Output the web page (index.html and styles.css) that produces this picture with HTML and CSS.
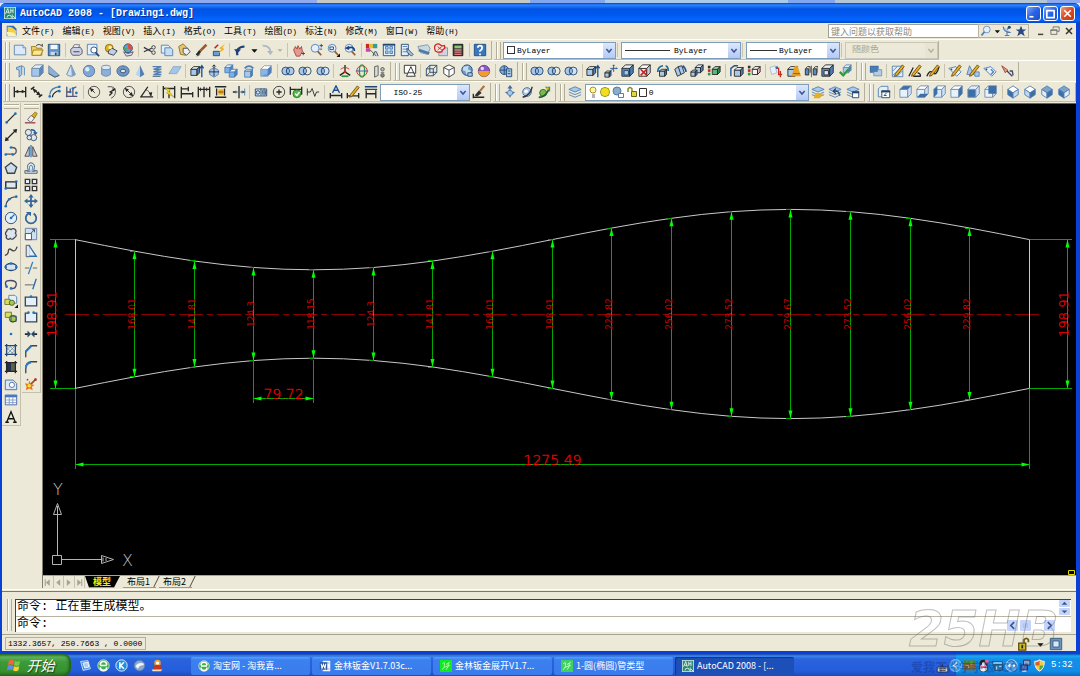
FILE: index.html
```html
<!DOCTYPE html>
<html lang="zh-CN">

<head>
    <meta charset="utf-8">
    <title>AutoCAD 2008 - [Drawing1.dwg]</title>
    <link rel="stylesheet" href="styles.css">
    <script src="script.js" defer></script>
</head>

<body>
    <div class="backdrop"></div>
    <main class="window">
        <header class="titlebar">
            <svg class="app-icon" data-icon="app"></svg>
            <h1>AutoCAD 2008 - [Drawing1.dwg]</h1>
            <div class="window-buttons">
                <button aria-label="Minimize"><svg data-icon="winmin"></svg></button>
                <button aria-label="Maximize"><svg data-icon="winmax"></svg></button>
                <button class="close" aria-label="Close"><svg data-icon="winclose"></svg></button>
            </div>
        </header>

        <nav class="menubar">
            <svg class="doc-icon" data-icon="doc"></svg>
            <button>文件<span>(F)</span></button>
            <button>编辑<span>(E)</span></button>
            <button>视图<span>(V)</span></button>
            <button>插入<span>(I)</span></button>
            <button>格式<span>(O)</span></button>
            <button>工具<span>(T)</span></button>
            <button>绘图<span>(D)</span></button>
            <button>标注<span>(N)</span></button>
            <button>修改<span>(M)</span></button>
            <button>窗口<span>(W)</span></button>
            <button>帮助<span>(H)</span></button>
            <div class="help-search">
                <input type="text" aria-label="帮助" placeholder="键入问题以获取帮助">
                <div class="help-tools" data-tools="search drop comm star"></div>
                <div class="doc-buttons" data-tools="docmin docrestore docclose"></div>
            </div>
        </nav>

        <div class="toolbar-row">
            <div class="toolbar standard" role="toolbar" aria-label="Standard">
                <i class="grip"></i>
                <div class="tools" data-tools="new open save | plot preview publish dwf | cut copy paste match block | undo drop redo dropoff | pan zoomrt zoomwin zoomprev | props center palettes sheet markup calc | help"></div>
            </div>
            <div class="toolbar properties" role="toolbar" aria-label="Properties">
                <i class="grip"></i>
                <div class="combo color">
                    <i class="swatch"></i>
                    <select aria-label="Color"><option>ByLayer</option></select>
                    <svg class="arrow" data-icon="chevron"></svg>
                </div>
                <i class="sep"></i>
                <div class="combo linetype">
                    <i class="sample"></i>
                    <select aria-label="Linetype"><option>ByLayer</option></select>
                    <svg class="arrow" data-icon="chevron"></svg>
                </div>
                <i class="sep"></i>
                <div class="combo lineweight">
                    <i class="sample"></i>
                    <select aria-label="Lineweight"><option>ByLayer</option></select>
                    <svg class="arrow" data-icon="chevron"></svg>
                </div>
                <i class="sep"></i>
                <div class="combo plotstyle">
                    <select aria-label="Plot style" disabled><option>随颜色</option></select>
                    <svg class="arrow" data-icon="chevron"></svg>
                </div>
            </div>
        </div>

        <div class="toolbar-row">
            <div class="toolbar modeling" role="toolbar" aria-label="Modeling">
                <i class="grip"></i>
                <div class="tools" data-tools="polysolid box wedge cone sphere cylinder torus pyramid helix planar | extrude gizmo cubes revolve loft | union subtract intersect | move3d rotate3d align3d"></div>
            </div>
            <div class="toolbar visual" role="toolbar" aria-label="Visual Styles">
                <i class="grip"></i>
                <div class="tools" data-tools="wire2d | wire3d hidden realistic conceptual | stylemgr"></div>
            </div>
            <div class="toolbar solidedit" role="toolbar" aria-label="Solid Editing">
                <i class="grip"></i>
                <div class="tools" data-tools="union subtract intersect | extrude movef offsetf deletef rotatef taperf copyf colorf | copyedge coloredge | imprint clean separate shell check"></div>
            </div>
            <div class="toolbar modify2" role="toolbar" aria-label="Modify II">
                <i class="grip"></i>
                <div class="tools" data-tools="draworder | hatchedit polyedit splineedit | attedit attblock attsync attext"></div>
            </div>
        </div>

        <div class="toolbar-row">
            <div class="toolbar dimension" role="toolbar" aria-label="Dimension">
                <i class="grip"></i>
                <div class="tools" data-tools="linear aligned arclen ordinate | radius jogged diameter angular | quick baseline continue space dimbreak | tolerance centermark inspect jogline | dimedit dimtext dimupdate"></div>
                <div class="combo dimstyle">
                    <select aria-label="Dimension style"><option>ISO-25</option></select>
                    <svg class="arrow" data-icon="chevron"></svg>
                </div>
                <div class="tools" data-tools="stylebrush"></div>
            </div>
            <div class="toolbar orbit" role="toolbar" aria-label="Orbit">
                <i class="grip"></i>
                <div class="tools" data-tools="orbit freeorbit contorbit"></div>
            </div>
            <div class="toolbar layers" role="toolbar" aria-label="Layers">
                <i class="grip"></i>
                <div class="tools" data-tools="layers"></div>
                <div class="combo layer">
                    <svg class="layer-state" data-icon="layerstate"></svg>
                    <select aria-label="Layer"><option>0</option></select>
                    <svg class="arrow" data-icon="chevron"></svg>
                </div>
                <div class="tools" data-tools="laycur layprev laystate"></div>
            </div>
            <div class="toolbar views" role="toolbar" aria-label="View">
                <i class="grip"></i>
                <div class="tools" data-tools="namedviews | vtop vbottom vleft vright vfront vback | sw se ne nw"></div>
            </div>
        </div>

        <section class="workspace">
            <aside class="docks">
                <div class="dock draw" role="toolbar" aria-label="Draw">
                    <i class="grip"></i>
                    <div class="tools" data-tools="line xline pline polygon rect arc circle cloud spline ellipse ellarc insblock mkblock point hatch gradient region table mtext"></div>
                </div>
                <div class="dock modify" role="toolbar" aria-label="Modify">
                    <i class="grip"></i>
                    <div class="tools" data-tools="erase copyobj mirror offset array move rotate scale stretch trim extend breakpt break join chamfer fillet explode"></div>
                </div>
            </aside>
            <div class="document">
                <svg class="canvas" role="img" aria-label="Drawing1.dwg">
                    <g id="sheet" transform="translate(-43 -104)">
                        <g class="ucs">
                            <path d="M52.5 555.5h9v9h-9zM57.5 555V515M53.5 514.5h8l-4-11zM62 559.5h39M101.5 555.5v8l12-4z" />
                            <path d="M57.5 506v9M103 557.5v4M106 558v3" />
                            <text x="53" y="495">Y</text>
                            <text x="122" y="566">X</text>
                        </g>
                        <path class="corner" d="M1068.5 570.5h6v4h-6z" />
                    </g>
                </svg>
                <div class="tabs">
                    <div class="tab-nav" data-tools="first prev next last"></div>
                    <button class="tab active">模型</button>
                    <button class="tab">布局1</button>
                    <button class="tab">布局2</button>
                </div>
            </div>
        </section>

        <section class="command">
            <i class="grip"></i>
            <div class="console">
                <div class="history">
                    <p>命令: 正在重生成模型。</p>
                    <div class="vscroll" data-tools="up down"></div>
                </div>
                <div class="prompt">
                    <label for="cmd">命令:</label>
                    <input type="text" id="cmd">
                    <div class="hscroll" data-tools="left thumb right"></div>
                </div>
            </div>
        </section>

        <footer class="status">
            <output>1332.3657, 250.7663 , 0.0000</output>
            <div class="status-tools" data-tools="lock drop screen"></div>
        </footer>
    </main>

    <div class="taskbar">
        <button class="start"><svg data-icon="flag"></svg>开始</button>
        <div class="quick" data-tools="desk ie kugou bird qq"></div>
        <div class="tasks">
            <button><svg data-icon="ie"></svg>淘宝网 - 淘我喜...</button>
            <button><svg data-icon="word"></svg>金林钣金V1.7.03c...</button>
            <button><svg data-icon="jl"></svg>金林钣金展开V1.7...</button>
            <button><svg data-icon="jl2"></svg>1-圆(椭圆)管类型</button>
            <button class="active"><svg data-icon="app"></svg>AutoCAD 2008 - [...</button>
        </div>
        <svg class="keyboard" data-icon="keyboard"></svg>
        <div class="tray">
            <div class="tray-icons" data-tools="collapse box3 penguin monitor globe net shield"></div>
            <time>5:32</time>
        </div>
        <div class="watermark">
            <b>25HB</b>
            <span>爱我下件学学钣 .COM</span>
        </div>
    </div>
</body>

</html>
```
FILE: styles.css
```css
* {
    box-sizing: border-box;
}

body {
    margin: 0;
    min-height: 100vh;
    display: flex;
    flex-direction: column;
    background: #ece9d8;
    color: #000;
    font-family: "Noto Sans CJK SC", sans-serif;
    font-size: 9px;
    line-height: 12px;
}

button {
    border: 0;
    padding: 0;
    margin: 0;
    background: none;
    color: inherit;
    font: inherit;
    display: flex;
    align-items: center;
    justify-content: center;
}

svg {
    display: block;
    flex: none;
}

.backdrop {
    height: 3px;
    background: linear-gradient(90deg, #8fabee 317px, #c6c8c2 317px 530px, #7fa6ef 530px 605px, #a9c9e8 605px 788px, #7fa6ef 788px 835px, #b4c6d4 835px 1047px, #8fabee 1047px);
}

.window {
    flex: 1;
    display: flex;
    flex-direction: column;
    padding: 0 4px 3px 2px;
    background: #0a3fd8;
    border-radius: 6px 6px 0 0;
}

/* title bar */
.titlebar {
    height: 20px;
    display: flex;
    align-items: center;
    gap: 4px;
    margin: 0 -4px 0 -2px;
    padding: 0 5px 0 4px;
    border-radius: 6px 6px 0 0;
    background: linear-gradient(#0a3fc0, #2d83ff 2px, #0054e4 6px, #0059f0 12px, #0567ff 17px, #0046c8);
    color: #fff;

    h1 {
        margin: 0;
        flex: 1;
        font: bold 10px "Liberation Mono", monospace;
        text-shadow: 1px 1px 0 #0a2e8c;
    }
}

.app-icon {
    width: 12px;
    height: 12px;
}

.window-buttons {
    display: flex;
    gap: 2px;

    button {
        width: 15px;
        height: 15px;
        border: 1px solid #fff;
        border-radius: 3px;
        background: linear-gradient(135deg, #7fa8f8, #2a62e4 50%, #1d4fd0);
    }

    .close {
        background: linear-gradient(135deg, #f09a80, #dc4a22 50%, #c03a10);
    }

    svg {
        width: 13px;
        height: 13px;
    }
}

/* menu */
.menubar {
    height: 16px;
    display: flex;
    align-items: center;
    gap: 8px;
    padding-left: 4px;
    background: #ece9d8;

    > button span {
        font: 8px "Liberation Mono", monospace;
    }
}

.doc-icon {
    width: 12px;
    height: 12px;
    margin-right: -4px;
}

.help-search {
    margin-left: auto;
    display: flex;
    align-items: center;

    input {
        width: 150px;
        height: 14px;
        padding: 0 2px;
        border: 1px solid #a0a090;
        border-right: 0;
        background: #fff;
        font: 9px "Noto Sans CJK SC", sans-serif;
    }

    input::placeholder {
        color: #8c8c80;
    }

    svg {
        width: 12px;
        height: 12px;
    }
}

.help-tools {
    display: flex;
    height: 14px;
    border: 1px solid #b8b4a0;

    button {
        width: 14px;
    }

    .t-drop {
        width: 7px;
    }
}

.doc-buttons {
    display: flex;
    padding-left: 5px;

    button {
        width: 14px;
    }
}

/* toolbars */
.toolbar-row {
    height: 21px;
    display: flex;
    gap: 2px;
    padding: 1px 0 0 1px;
    border-top: 1px solid #fff;
    background: #ece9d8;
}

.toolbar {
    flex: none;
    display: flex;
    align-items: center;
    padding: 0 2px;
    border-right: 1px solid #b4b09c;
    border-bottom: 1px solid #c0bca8;

    svg {
        width: 14px;
        height: 14px;
    }

    button {
        flex: 1 1 0;
        min-width: 0;
        height: 18px;
    }

    .t-drop,
    .t-dropoff {
        flex: 0 0 9px;
    }
}

.tools {
    display: contents;
}

.toolbar button:hover,
.dock button:hover {
    background: #c1d2ee;
}

.grip {
    flex: none;
    width: 5px;
    height: 17px;
    margin-right: 1px;
    border: solid #b0ac98;
    border-width: 0 1px;
    box-shadow: inset 1px 0 #fff, inset -1px 0 #ece9d8;
}

.sep {
    flex: none;
    width: 1px;
    height: 14px;
    margin: 0 2px;
    background: #c8c4b0;
}

.standard { width: 489px; }
.properties { width: 445px; }
.modeling { width: 388px; }
.visual { width: 125px; }
.solidedit { width: 337px; }
.modify2 { width: 160px; }
.dimension { width: 488px; }
.orbit { width: 63px; }
.layers { width: 307px; }
.views { flex: 1; }

.properties .sep {
    margin: 0 2px 0 1px;
}

/* drop-downs */
.combo {
    position: relative;
    flex: none;
    height: 17px;
    margin-left: 1px;

    select {
        appearance: none;
        width: 100%;
        height: 100%;
        padding: 0 14px 0 4px;
        border: 1px solid #7f9db9;
        border-radius: 0;
        background: #fff;
        color: #000;
        font: 8px "Liberation Mono", "Noto Sans CJK SC", monospace;
    }

    select:disabled {
        padding-left: 6px;
        border-color: #c9c7ba;
        background: #ece9d8;
        color: #a8a594;
        opacity: 1;
        font-size: 9px;
    }

    select:disabled ~ .arrow {
        background: #e8e4d4;
        color: #b8b4a0;
    }
}

.combo .arrow {
    position: absolute;
    top: 1px;
    right: 1px;
    width: 12px;
    height: 15px;
    background: linear-gradient(#dde7fd, #b4c9f8);
    color: #3b5690;
    pointer-events: none;
}

.color { width: 113px; select { padding-left: 13px; } }
.linetype { width: 120px; select { padding-left: 52px; } }
.lineweight { width: 94px; select { padding-left: 32px; } }
.plotstyle { width: 93px; }
.dimstyle { width: 90px; select { padding-left: 12px; } }
.layer { width: 224px; select { padding-left: 63px; } }

.swatch,
.sample {
    position: absolute;
    left: 4px;
    top: 4px;
    width: 8px;
    height: 8px;
    border: 1px solid #333;
}

.sample {
    top: 8px;
    width: 45px;
    height: 1px;
    border-width: 1px 0 0;
}

.lineweight .sample {
    width: 27px;
}

.combo .layer-state {
    position: absolute;
    left: 2px;
    top: 1px;
    width: 60px;
    height: 15px;
}

/* workspace */
.workspace {
    flex: 1;
    display: flex;
    padding: 1px 0 3px;
    background: #ece9d8;
}

.docks {
    flex: none;
    width: 40px;
    display: flex;
    align-items: flex-start;
    gap: 1px;
}

.dock {
    width: 19px;
    display: flex;
    flex-direction: column;
    align-items: center;
    padding-top: 1px;
    border: solid #c4c0ac;
    border-width: 0 1px 1px 0;

    .grip {
        width: 15px;
        height: 5px;
        margin: 0 0 1px;
        border-width: 1px 0;
        box-shadow: inset 0 1px #fff;
    }

    button {
        flex: 1 1 0;
        min-height: 0;
        width: 17px;
    }

    svg {
        width: 14px;
        height: 14px;
    }
}

.draw { height: 323px; }
.modify { height: 290px; }

.document {
    flex: 1;
    display: flex;
    flex-direction: column;
    border-left: 1px solid #848070;
}

.canvas {
    width: 100%;
    flex: 1;
    border-top: 1px solid #666258;
    background: #000;
}

.outline {
    fill: none;
    stroke: #c8c8c8;
}

.axis {
    stroke: #8c0000;
    stroke-width: 1;
    stroke-dasharray: 24 4 6 4;
}

.dim-line {
    fill: none;
    stroke: #00a800;
    shape-rendering: crispEdges;
}

.dim-arrow {
    fill: #00ff00;
}

.dim-text {
    fill: #d00000;
    font: 9px "DejaVu Sans", sans-serif;
    text-anchor: middle;
}

.dim-text.tall,
.dim-text.wide {
    fill: #f00000;
    stroke: #f00000;
    stroke-width: 0.3;
    font-size: 13px;
    font-weight: 200;
}

.dim-text.wide {
    font-size: 14px;
}

.ucs {
    fill: none;
    stroke: #b4b4b4;

    text {
        fill: #c4c4c4;
        stroke: none;
        font: 200 16px "DejaVu Sans", sans-serif;
    }
}

.corner {
    fill: none;
    stroke: #e0d800;
}

.tabs {
    height: 13px;
    display: flex;
    gap: 3px;
    border-top: 1px solid #a8a494;
}

.tab-nav {
    display: flex;
    width: 42px;

    button {
        flex: 1;
        border-right: 1px solid #c4c0b0;
    }

    svg {
        width: 9px;
        height: 9px;
    }
}

.tab {
    position: relative;
    padding: 0 6px 0 4px;
    border-bottom: 1px solid #a09c8c;
}

.tab:not(.active)::after {
    content: "";
    position: absolute;
    right: -1px;
    top: 0;
    bottom: 0;
    border-right: 1px solid #504c40;
    transform: skewX(-26deg);
}

.tab.active {
    margin-left: -3px;
    padding: 0 9px 0 8px;
    background: #000;
    color: #f0f000;
    font-weight: bold;
    clip-path: polygon(0 0, 100% 0, 82% 100%, 12% 100%);
}

/* command window */
.command {
    display: flex;
    padding: 7px 5px 2px 5px;
    border-top: 1px solid #7c7a6c;
    background: #ece9d8;
    box-shadow: 0 -1px #ece9d8, 0 -2px #fff;

    .grip {
        height: 32px;
        margin-right: 3px;
    }
}

.console {
    flex: 1;
    border: solid #404040;
    border-width: 1px 0 0 1px;
    background: #fff;
    font: 12px/15px "Liberation Mono", "Noto Sans CJK SC", monospace;

    p {
        margin: 0;
        flex: 1;
    }

    svg {
        width: 9px;
        height: 9px;
    }

    button {
        border-radius: 1px;
        background: #c4d4fb;
        color: #3b5690;
    }
}

.history {
    height: 17px;
    display: flex;
    padding: 0 0 1px 1px;
    border-bottom: 1px solid #b8b4a4;
    overflow: hidden;
}

.vscroll {
    width: 12px;
    display: flex;
    flex-direction: column;
    gap: 1px;

    button {
        flex: 1;
        min-height: 0;
        width: 11px;
    }
}

.prompt {
    height: 15px;
    display: flex;
    align-items: center;
    padding-left: 1px;

    input {
        flex: 1;
        height: 14px;
        border: 0;
        padding: 0 4px;
        outline: 0;
        font: inherit;
    }
}

.hscroll {
    display: flex;
    width: 64px;
    gap: 2px;
    padding-top: 1px;

    button {
        width: 11px;
        height: 11px;
    }

    .t-right {
        margin-left: 11px;
    }
}

.status {
    height: 17px;
    display: flex;
    align-items: center;
    justify-content: space-between;
    padding: 1px 12px 0 3px;
    border-top: 1px solid #a8a494;
    background: #ece9d8;

    output {
        min-width: 141px;
        height: 13px;
        padding: 0 2px;
        border: 1px solid #b4b09c;
        font: 8px/12px "Liberation Mono", monospace;
    }
}

.status-tools {
    display: flex;

    button {
        width: 16px;
    }

    svg {
        width: 14px;
        height: 14px;
    }
}

/* taskbar */
.taskbar {
    position: relative;
    height: 22px;
    display: flex;
    align-items: stretch;
    background: linear-gradient(#1941a5, #3b86ee 2px, #2a63dc 5px, #245ddb 17px, #1d4bb8);
    color: #fff;
}

.start {
    width: 71px;
    gap: 6px;
    padding-right: 10px;
    border-radius: 0 8px 8px 0;
    background: linear-gradient(#2f7a2c, #5cb257 3px, #3c9a3a 8px, #37922f 17px, #2a6d24);
    box-shadow: inset -2px 0 3px #1d5a1b;
    font: italic 14px "Noto Sans CJK SC", sans-serif;
    text-shadow: 1px 1px 1px #123c10;

    svg {
        width: 14px;
        height: 14px;
    }
}

.quick {
    display: flex;
    padding-left: 6px;

    button {
        width: 17px;
        margin-right: 1px;
    }

    svg {
        width: 13px;
        height: 13px;
    }
}

.tasks {
    display: flex;
    flex: 1;
    gap: 2px;
    margin-left: 24px;
    padding: 3px 0 1px;

    button {
        flex: 0 1 119px;
        justify-content: flex-start;
        gap: 3px;
        padding-left: 7px;
        border-radius: 2px;
        background: linear-gradient(#5b9cf8, #3c80f0 3px, #3a7bea);
        white-space: nowrap;
    }

    .active {
        background: #1d4fb8;
        box-shadow: inset 1px 1px 1px #12347c;
    }

    svg {
        width: 12px;
        height: 12px;
    }
}

.keyboard {
    width: 13px;
    height: 13px;
    align-self: center;
    margin: 4px 7px 0 0;
}

.tray {
    width: 124px;
    display: flex;
    align-items: center;
    background: linear-gradient(#0c59b9, #1ca8f4 2px, #1290e8 5px, #0f8dea 17px, #0b6cc0);

    time {
        padding-left: 5px;
        font: 9px "Liberation Mono", monospace;
    }
}

.tray-icons {
    display: flex;
    margin-left: -8px;

    button {
        width: 14px;
    }

    svg {
        width: 13px;
        height: 13px;
    }
}

.watermark {
    position: absolute;
    right: 3px;
    bottom: 0;
    width: 168px;
    pointer-events: none;

    b {
        display: block;
        color: transparent;
        font: italic bold 50px/58px "DejaVu Sans", sans-serif;
        -webkit-text-stroke: 1px rgba(110, 110, 110, 0.45);
    }

    span {
        display: block;
        padding-left: 2px;
        color: rgba(14, 44, 130, 0.4);
        font: bold 12px/18px "Noto Sans CJK SC", sans-serif;
        white-space: nowrap;
    }
}
```
FILE: script.js
```js
const NAVY = '#24466f';
const BLUE = '#4f7fb5';
const SKY = '#a9c8ea';
const PALE = '#e4effa';
const INK = '#262626';
const GOLD = '#e2b021';
const GREEN = '#2f9a3c';
const RED = '#c8281e';

const path = (d, stroke = INK, fill = 'none', width = 1) =>
    `<path d="${d}" stroke="${stroke}" fill="${fill}" stroke-width="${width}"/>`;
const area = (d, fill) => `<path d="${d}" fill="${fill}"/>`;
const dot = (x, y, r, fill, stroke = 'none') => `<circle cx="${x}" cy="${y}" r="${r}" fill="${fill}" stroke="${stroke}"/>`;
const dots = (...pts) => pts.map(([x, y]) => dot(x, y, 1.5, '#1c74c8')).join('');

// small cube at x, y with front side s and depth d
const cube = (x, y, s, d, front = SKY, top = PALE, side = BLUE, line = INK) =>
    path(`M${x} ${y + d}h${s}v${s}h${-s}z`, line, front) +
    path(`M${x} ${y + d}l${d} ${-d}h${s}l${-d} ${d}z`, line, top) +
    path(`M${x + s} ${y + d}l${d} ${-d}v${s}l${-d} ${d}z`, line, side);

const pencil = area('M5 11l8-10 2 2-8 10-3 1z', GOLD) + path('M5 11l8-10 2 2-8 10-3 1z', '#6b4a10');
const rings = (mid) => dot(5.5, 8, 4.5, SKY, NAVY) + dot(10.5, 8, 4.5, mid, NAVY) + path('M8 4.5a4.5 4.5 0 0 1 0 7a4.5 4.5 0 0 1 0-7', NAVY, SKY);
const lens = dot(7, 6, 4.5, PALE, BLUE) + path('M10 9.5l4 4.5', '#96602c', 'none', 2);
const sheets = area('M1 5l7-3 7 3-7 3z', SKY) + path('M1 5l7-3 7 3-7 3zM1 8l7 3 7-3M1 11l7 3 7-3', BLUE);
const iso = (l, r, t) => path('M8 1l6 4-6 4-6-4z', BLUE, t) + path('M2 5l6 4v6l-6-4z', BLUE, l) + path('M14 5l-6 4v6l6-4z', BLUE, r);
const tag = path('M1 5l8-2 6 6-5 5z', BLUE, PALE) + dot(4, 6, 1, NAVY);

const icons = {
    app: area('M0 0h16v16H0z', '#d8f0e4') + area('M1 1h14v14H1z', '#2f8a76') + path('M2 9l3-7 2 7M3 7h4M9 2v6M9 5h3M12 2v6M4 14q0-3 3-3t3 3M11 10v5M12 12l3 3', '#fff'),
    doc: area('M1 1h9l4 4v10H1z', '#2c66c0') + area('M2 2l6 1 6 5-1 6-11-3z', '#f0cf4c') + area('M1 9l9 1 5 5H2z', '#fff3b0'),
    winmin: path('M3 12h5', '#fff', 'none', 2),
    winmax: path('M3 4.5h10M3.5 4v9h9V4', '#fff', 'none', 2),
    winclose: path('M4 4l8 8M12 4l-8 8', '#fff', 'none', 2),
    search: dot(9, 6, 4.5, PALE, BLUE) + path('M6 9l-4 5', BLUE, 'none', 2.5),
    drop: area('M5 7h7l-3.5 4z', '#111'),
    dropoff: area('M5 7h6l-3 3z', '#b4b09c'),
    comm: path('M8 8v6M5 14h6M3 2q0 8 10 8M12 2L8 6', BLUE, SKY, 1.5) + dot(11, 3, 2, NAVY),
    star: area('M8 1l2 5h5l-4 3 2 6-5-3.5L3 15l2-6-4-3h5z', '#2c4a80'),
    docmin: path('M4 12.5h7', '#444', 'none', 2),
    docrestore: path('M5.5 5V2.5h8v6H11M2.5 6.5h8v6h-8zM2 7h9', '#555'),
    docclose: path('M4 4l8 8M12 4l-8 8', '#333', 'none', 2),
    chevron: path('M4.5 6l3.5 4 3.5-4', 'currentColor', 'none', 2),

    new: path('M1.5 2.5h10l3 3v8h-13z', '#5b84a8', '#dbeafa') + path('M11.5 2.5v3h3', '#5b84a8', '#fff'),
    open: path('M1.5 4h5l1 2h6v8h-11z', '#9a7a20', '#f0cf60') + path('M4 8h11l-3 6H2z', '#9a7a20', '#ffe890') + path('M7 3q4-3 7 1v-3', INK),
    save: path('M1.5 1.5h13v13h-13z', NAVY, '#5b92cc') + area('M4 2h8v5H4z', '#f4f8fc') + area('M4 10h8v4H4z', '#c4d8ee') + area('M9 11h2v3H9z', NAVY),
    plot: path('M4 6l2-4h6l-1 4', '#667', '#fff') + path('M2 7l3-2h8l2 3v4l-3 2H4l-2-3z', '#556', '#ccd0e4') + path('M5 10h7', '#334'),
    preview: path('M1.5 1.5h11v12h-11z', BLUE, PALE) + dot(9, 8, 3.5, '#fff', NAVY) + path('M11 11l4 4', NAVY, 'none', 2),
    publish: dot(6, 6, 4.5, GOLD, '#8a6a10') + path('M5 9l4-3 6 3-4 5-6-2z', '#334', '#bcd0e8') + dot(7, 5, 2, '#fff3a0'),
    dwf: dot(8, 6, 5, '#58a0d8', NAVY) + area('M8 1a5 5 0 0 1 4 8l-4-3z', '#e05038') + area('M3 6l5 0-3 4z', '#4cae50') + path('M3 10l5 2 6-2-2 4-6 1z', '#556', '#dde'),
    cut: path('M1 5l9 5M1 10l9-4', '#334', 'none', 1.5) + dot(12, 5, 2, 'none', '#334') + dot(12, 11, 2, 'none', '#334'),
    copy: path('M1.5 2.5h8l2 2v7h-10z', BLUE, PALE) + path('M5.5 5.5h7l2 2v7h-9z', BLUE, '#c4dcf4'),
    paste: path('M2 4l5-3 6 6-3 7-6-1z', '#8a6a20', '#e8c86c') + path('M7 6l5 0 3 4-4 4-4-3z', '#445', '#e8f0fa'),
    match: path('M2 14l4-5', INK, 'none', 3) + path('M6 9l7-7', '#9a5a30', 'none', 3) + path('M2 15l4-2', '#555'),
    block: path('M1.5 9.5h7v5h-7z', NAVY, '#6c9cd0') + area('M15 1l-7 5 3 1-5 6 8-6-2-2z', '#f0b020') + path('M3 6l4-4', RED, 'none', 2),
    undo: path('M4 14q-3-9 8-10', '#1d3f7c', 'none', 2.5) + area('M0 7h8l-4 5z', '#1d3f7c'),
    redo: path('M3 3q9 0 9 8', '#b0b8c4', 'none', 2) + area('M8 9h7l-3 5z', '#b0b8c4'),
    pan: path('M3 8l2-4 2 3 1-4 2 4 2-3 1 6-3 5H6z', '#a04040', '#e49a8c') + path('M12 12h4M14 10v4', NAVY),
    zoomrt: lens + path('M12 3h4M14 1v4M12 7h3', NAVY),
    zoomwin: lens + path('M4.5 4.5h4v3h-4z', NAVY) + area('M16 12v4h-4z', '#111'),
    zoomprev: lens + path('M13 9Q13 3 5 6', '#1d3f7c', 'none', 2) + area('M2 6l5-3v5z', '#1d3f7c'),
    props: area('M1 1h4v5H1z', RED) + area('M5 1h4v5H5z', '#e8c020') + area('M9 1h5v5H9z', '#3c9a9a') + area('M1 6h5v4H1z', '#d040b0') + path('M6 8l7 7M9 15l2-5h2l2 5', '#345', '#cde'),
    center: path('M1.5 1.5h13v13h-13z', NAVY, PALE) + path('M4 4h3v3H4zM9 4h3v3H9zM4 9h3v3H4zM9 9h3v3H9z', BLUE, SKY) + path('M1 2h14', NAVY, 'none', 2),
    palettes: path('M1.5 1.5h8v13h-8z', NAVY, PALE) + path('M3 4h5M3 7h5M3 10h5', BLUE) + path('M8 6l7 7-2 2-5-5z', NAVY, SKY),
    sheet: path('M1 4l11-2 3 4-3 7-8-2z', '#7c94a8', '#c8d8e4') + path('M2 8l12 4', '#4c7ca4', 'none', 3),
    markup: path('M5.5 5.5h10v9h-10z', '#889', '#ccd4e4') + path('M2 2q3-2 5 0t5 1q1 3-1 4t-2 3q-4 1-6 0t-2-3q-1-3 1-5z', RED, '#fbe4e4', 1.5) + path('M4 4l5 4M9 4L4 8', RED),
    calc: path('M2.5 1.5h11v13h-11z', '#111', '#3c3c3c') + area('M4 3h8v3H4z', '#88c878') + path('M4 8h8M4 10.5h8M4 13h8', '#e08080', 'none', 1.5),
    help: path('M1.5 1.5h13v13h-13z', '#1c4a84', '#3a78bc') + path('M5.5 5.5q0-2.5 2.5-2.5t2.5 2.5T8 9v1M8 12v2', '#fff', 'none', 2),

    polysolid: path('M4 4l6-2v10l-3 3V7L4 6z', BLUE, SKY) + path('M10 2l3 2v9', BLUE),
    box: cube(2, 1, 9, 4, '#a4c4e8', PALE, '#5888bc', '#6888a8'),
    wedge: path('M2 2v9l7 4 5-2z', '#6888a8', '#8cb0dc') + path('M2 11l7 4 5-2', '#456'),
    cone: path('M8 1l5 11q-5 4-10 0z', '#6888a8', '#cfe0f2') + area('M8 1l5 11q-2 2-4 2z', '#7ca0cc'),
    sphere: dot(8, 8, 6.5, '#7ea6d6', '#5878a0') + dot(6, 6, 2.5, '#dcebfa'),
    cylinder: path('M3 4v8q5 4 10 0V4', '#6888a8', '#8cb0dc') + '<ellipse cx="8" cy="4" rx="5" ry="2.5" fill="#dcebfa" stroke="#6888a8"/>',
    torus: '<ellipse cx="8" cy="8" rx="7" ry="6" fill="#6c94c4" stroke="#4c6c94"/><ellipse cx="8" cy="8" rx="3" ry="2" fill="#ece9d8" stroke="#34547c"/>',
    pyramid: area('M8 1l5 11-5 3z', '#5480b4') + area('M8 1L3 12l5 3z', '#b8d4f0'),
    helix: path('M3 3h10l-9 3h9l-9 3h9l-9 3h9', BLUE, 'none', 1.5) + path('M3 14h9', NAVY),
    planar: path('M1 11l5-8h9l-5 8z', '#8ca8c8', '#a4c4ec'),
    extrude: cube(1, 3, 7, 3) + path('M13.5 15V2M11.5 5l2-3 2 3', '#1c4f94', 'none', 1.5),
    gizmo: path('M8 4l5 3v5l-5 3-5-3V7z', BLUE, SKY) + path('M8 1v13M2 9h12M6 3l2-2 2 2', '#223'),
    cubes: cube(1, 1, 6, 3, '#7cb0ea', PALE, '#4a80c4', BLUE) + cube(6, 6, 6, 3, '#7cb0ea', PALE, '#4a80c4', BLUE),
    revolve: path('M3 5q5-5 10 0', BLUE, 'none', 2) + cube(3, 6, 7, 2, SKY, PALE, BLUE, BLUE),
    loft: cube(2, 2, 8, 4, '#8cb4e4', '#fff', '#4a7cc0', '#7c9cc0') + path('M5 13q8 0 9-8', BLUE),
    union: rings(SKY),
    subtract: rings('#ece9d8'),
    intersect: rings('#cfe4f6'),
    move3d: path('M8 9V1M8 9l-6 4M8 9l6 4', '#222', 'none', 1.5) + path('M3 6q5-4 10 0', RED) + path('M4 14h8', GREEN, 'none', 2) + dot(8, 9, 1.5, RED),
    rotate3d: dot(8, 8, 6, 'none', RED) + '<ellipse cx="8" cy="8" rx="3" ry="7" fill="none" stroke="#2f9a3c" stroke-width="1.5"/>' + path('M1 8h14', '#2058c0'),
    align3d: path('M3 3l4-1v11l-4 2z', '#555', '#ddd') + dot(12, 6, 2, '#bbb', '#555') + dot(12, 13, 2, '#888', '#555') + path('M10 10h4', '#555'),
    wire2d: path('M1.5 1.5h13v9h-13z', INK, '#fff') + path('M4 14l5-11 5 11zM6 10h6', INK, '#fff'),
    wire3d: path('M1.5 5.5h8v8h-8zM5.5 1.5h8v8h-8zM1.5 5.5l4-4M9.5 5.5l4-4M9.5 13.5l4-4M1.5 13.5l4-4', NAVY),
    hidden: path('M8 1l6 3v7l-6 4-6-4V4z', '#333', '#fff') + path('M2 4l6 3 6-3M8 7v8', '#333'),
    realistic: dot(8, 7, 6, '#6c9cc8', NAVY) + area('M4 3l6-1-1 4 4 2-5 5-2-5-3-1z', '#c4dcf0') + path('M9 10h5v4H9z', NAVY, SKY),
    conceptual: dot(8, 8, 6.5, '#8c58c8', '#6c3c78') + area('M1.5 8h13a6.5 6.5 0 0 1-13 0z', '#f0a020') + dot(6, 5, 2, '#f4d4ec'),
    stylemgr: dot(6, 7, 5, '#7cacd8', NAVY) + path('M6 2v10M1 7h10', NAVY) + path('M8.5 5.5h6v9h-6z', NAVY, SKY) + path('M10 8h3M10 11h3', NAVY),
    movef: cube(1, 8, 5, 2) + path('M11 1v8M7 5h8M6 9l4-3M10 2l1-1 1 1M14 4l1 1-1 1', '#1c4f94'),
    offsetf: cube(1, 1, 9, 4, '#5c8cc4') + path('M3.5 7.5h5v5h-5z', NAVY, SKY),
    deletef: cube(1, 1, 9, 4, '#e8ecf0', '#fff', '#ccd') + path('M3 6l7 7M10 6l-7 7', RED, 'none', 2),
    rotatef: cube(4, 6, 6, 2) + path('M2 9q0-6 6-7M14 8q0-5-3-6', '#1c6c9c', 'none', 2),
    taperf: path('M2 6l4-3 3 9-4 2zM6 3l4-1 3 8-4 2', INK, SKY) + path('M11 2q3 2 4 7', '#1c4f94', 'none', 2),
    copyf: cube(6, 1, 6, 3) + cube(1, 7, 5, 2),
    colorf: area('M1 2h3v3H1z', '#333') + area('M1 6h3v3H1z', RED) + area('M1 10h3v3H1z', GREEN) + cube(6, 3, 6, 3, '#58b878', '#a4dcb4', '#2f8a50'),
    copyedge: path('M1 14V5l4-3h4', '#1c4f94', 'none', 1.5) + cube(5, 4, 7, 3),
    coloredge: area('M1 2h3v3H1z', '#333') + area('M1 6h3v3H1z', RED) + area('M1 10h3v3H1z', GREEN) + cube(6, 3, 6, 3, '#f4f4f4', '#fff', '#f0b0b0'),
    imprint: path('M1 4l6-2 2 8-6 2z', '#a8bccc', '#e8f0f8') + path('M8 5h3v7h4M13 8v7', RED, 'none', 1.5) + dots([9, 4]),
    clean: cube(1, 3, 8, 3) + area('M9 2h3l4 12H5z', '#e8a020') + path('M7 11h8', '#8a5a10'),
    separate: path('M1.5 5.5h4v7h-4zM10.5 5.5h4v7h-4z', INK, '#5c8cc4') + path('M2 5l2-2h3v7M11 5l2-2h3v7', INK) + path('M8.5 2v13', '#555'),
    shell: cube(1, 1, 9, 4, '#5c8cc4') + path('M3.5 7.5h5v5h-5z', INK, '#dce8f4'),
    check: cube(6, 1, 6, 3, SKY, PALE, BLUE, '#68a') + path('M2 9l4 4 6-7', GREEN, 'none', 2.5),
    draworder: area('M1 2h10v8H1z', '#3c6ea8') + path('M5.5 6.5h9v7h-9z', '#7890a8', '#b4cce4') + area('M2 3h8v6H2z', '#4c7cb4'),
    hatchedit: path('M1.5 2.5h12v12h-12z', BLUE, PALE) + path('M2 8l5-5M2 13L13 3M7 14l6-6', BLUE) + pencil,
    polyedit: path('M1 14l5-10M6 14h8q1-3-3-4', INK, 'none', 1.5) + pencil,
    splineedit: path('M1 14q3-8 7-4t7-7', INK, 'none', 1.5) + pencil,
    attedit: tag + pencil,
    attblock: path('M4 2l5 10H1zM10 9h5v5h-5z', BLUE, SKY) + pencil,
    attsync: tag + path('M9 6l3 3-3 3', BLUE, 'none', 1.5),
    attext: path('M2 2l7 5-3 3z', '#a03c3c', '#e09a8c') + path('M8 8l6 6M11 8l3 0 1 5', '#446', 'none', 1.5),

    linear: path('M1.5 2v12M14.5 2v12M2 7.5h12', INK, 'none', 1.5) + area('M2 7.5l4-2v4zM14 7.5l-4-2v4z', INK),
    aligned: path('M1 5l4-3M10 14l4-3M3 4l9 8', INK, 'none', 1.5) + area('M3 4l5 2-3 3zM12 12l-5-1 3-4z', INK),
    arclen: path('M2 11q1-8 11-9', BLUE, 'none', 1.5) + path('M5 14q0-5 8-8', INK, 'none', 1.5) + dots([2, 13], [13, 2], [13, 7]),
    ordinate: path('M2 2v12M1 13h13M2 8h4V4M9 13V4l4-2', '#557', 'none', 1.5) + dots([6, 8], [9, 4], [13, 9]),
    radius: dot(8, 8, 6.5, 'none', '#444') + path('M4 4l5 5', INK) + area('M3 3l5 2-3 3z', INK),
    jogged: path('M3 2q9-1 9 5t-5 8', '#444') + path('M5 12l3-3-2-1 5-3', INK, 'none', 1.5) + area('M12 4l-4 0 2 3z', INK),
    diameter: dot(8, 8, 6.5, 'none', '#444') + path('M4 4l8 8', INK) + area('M3 3l5 2-3 3zM13 13l-5-2 3-3z', INK),
    angular: path('M9 2L1 13.5h14', INK, 'none', 1.5) + path('M6 5q6 2 6 8', '#445') + area('M10 9l4-1-1 5z', INK),
    quick: path('M1.5 1v14M14.5 1v14M8 6v9M2 4h12', INK, 'none', 1.5) + area('M3 3l7 2-2 2 6 7-9-5 2-2z', '#f0d820') + path('M3 3l7 2-2 2 6 7-9-5 2-2z', '#8a7a10', 'none', 0.5),
    baseline: path('M1.5 2v13M2 4.5h7M9.5 2v5M2 10h12M14.5 8v6', INK, 'none', 1.5),
    continue: path('M1.5 2v12M8 2v12M14.5 2v12M2 5h12', INK, 'none', 1.5) + path('M4 3v4M11 3v4', INK),
    space: path('M1 2h13M1 14h13M3 4v8M12 4v8', INK, 'none', 1.5) + area('M5 5h6v6H5z', GOLD) + path('M5 8h6', '#8a3a10'),
    dimbreak: path('M8 1v14M1 8h4M11 8h4', INK, 'none', 1.5) + area('M4 6l3 2-3 2zM12 6l-3 2 3 2z', BLUE) + path('M14.5 4v8', BLUE),
    tolerance: path('M1.5 4.5h13v8h-13zM8 4v8M11.5 4v8', NAVY, '#cfe0f4') + dot(4.5, 8.5, 2, 'none', NAVY) + path('M10 6v5M13 6v5', NAVY),
    centermark: dot(8, 8, 6.5, 'none', '#333') + path('M8 5v6M5 8h6', INK, 'none', 1.5),
    inspect: path('M1.5 2v9M14.5 2v9M2 5h12', INK, 'none', 1.5) + dot(9, 10, 4.5, '#58b848', '#2c7a24') + path('M7 10l2 2 3-4', '#fff', 'none', 1.5),
    jogline: path('M1 8h4l2-4 3 9 2-5h3M1.5 4v8', INK),
    dimedit: path('M4 9l4-8 4 8M5 6h6', '#1c4f94', 'none', 1.5) + path('M1.5 9v6M14.5 9v6M2 12h12', INK, 'none', 1.5),
    dimtext: path('M1.5 9v6M14.5 9v6M2 12.5h12', INK, 'none', 1.5) + pencil,
    dimupdate: path('M1 2h14M1 5h14', NAVY, 'none', 1.5) + path('M2.5 6v9M13.5 6v9M3 10h10', INK, 'none', 1.5),
    stylebrush: path('M2 14h12M1.5 10v5', INK, 'none', 1.5) + area('M3 12l5-6 3 3-5 4z', '#333') + path('M9 7l5-6', '#b07040', 'none', 2.5),
    orbit: path('M8 2v12M3 8q5 5 10 0', '#4c6c94', 'none', 1.5) + dot(8, 9, 3, SKY, BLUE) + area('M5 4l3-4 3 4z', '#4c6c94'),
    freeorbit: dot(8, 8, 5, SKY, '#4c6c94') + path('M3 14Q12 12 14 2', '#334', 'none', 1.5) + dot(7, 7, 2, '#fff'),
    contorbit: dot(7, 9, 4, '#78b84c', '#2c6a24') + path('M2 14q9 0 12-11', '#1d5a34', 'none', 2) + area('M9 2h6v6z', '#2f9a3c') + dot(12, 4, 1.5, GOLD),
    layers: sheets,
    laycur: sheets + area('M5 9h9l-4 6H3z', GOLD),
    layprev: sheets + path('M13 12q0-6-6-5M9 4L6 7l3 3', NAVY, 'none', 1.5),
    laystate: sheets + path('M7.5 7.5h7v7h-7z', NAVY, '#fff') + path('M7 8.5h8', NAVY, 'none', 2),
    namedviews: path('M1.5 4.5l3-3h8v5M1.5 4.5v9h5', BLUE, PALE) + path('M5.5 6.5h9v8h-9z', NAVY, '#fff') + path('M8 12l3-3M11 12H8', NAVY) + path('M5 7.5h10', NAVY, 'none', 2),
    vtop: cube(1, 1, 9, 4, '#e8f2fc', '#3c6ea8', '#d0e0f0', '#6c8cb0'),
    vbottom: cube(1, 1, 9, 4, '#e8f2fc', '#fff', '#d0e0f0', '#6c8cb0') + area('M1 14l4-4h9l-4 4z', '#3c6ea8'),
    vleft: cube(1, 1, 9, 4, '#d8e8f8', '#fff', '#d0e0f0', '#6c8cb0') + area('M1 5l4-4v9l-4 4z', '#3c6ea8'),
    vright: cube(1, 1, 9, 4, '#e8f2fc', '#fff', '#3c6ea8', '#6c8cb0'),
    vfront: cube(1, 1, 9, 4, '#3c6ea8', '#e8f2fc', '#d0e0f0', '#6c8cb0'),
    vback: cube(1, 1, 9, 4, '#e8f2fc', '#fff', '#d0e0f0', '#6c8cb0') + area('M5 1h9v9H5z', '#3c6ea8'),
    sw: iso('#3c6ea8', '#c4d8ec', '#fff'),
    se: iso('#c4d8ec', '#3c6ea8', '#fff'),
    ne: iso('#e4effa', '#3c6ea8', '#7ca4cc'),
    nw: iso('#3c6ea8', '#e4effa', '#7ca4cc'),

    line: path('M3 13L13 3', INK, 'none', 1.5) + dots([3, 13], [13, 3]),
    xline: path('M2 14L14 2', INK, 'none', 1.5) + area('M1 15l1-5 4 4zM15 1l-1 5-4-4z', INK),
    pline: path('M2 11.5h9M9 4q5 0 5 4t-5 4', '#555', 'none', 1.5) + dots([2, 12], [10, 12], [8, 4]),
    polygon: path('M8 2l6.5 5-2.5 7H4L1.5 7z', '#345', '#cfdce8', 1.5),
    rect: path('M2 4.5h12v7H2z', INK, '#dce8f4', 1.5) + dots([2, 12], [14, 4]),
    arc: path('M2 14Q3 4 14 3', '#445', 'none', 1.5) + dots([2, 14], [6, 6], [14, 3]),
    circle: dot(8, 8, 6.5, '#e4effa', NAVY) + path('M8 8l4-4', '#1c74c8', 'none', 1.5) + dots([8, 8]),
    cloud: path('M3 5a3 3 0 0 1 5-2 3 3 0 0 1 5 4 3 3 0 0 1-1 5 3 3 0 0 1-5 1 2.5 2.5 0 0 1-4-3 3 3 0 0 1 0-5z', '#445', '#dce4ec', 1.5),
    spline: path('M1 13q4-1 4-5t4-1 6-4', '#444', 'none', 1.5),
    ellipse: '<ellipse cx="8" cy="8" rx="6.5" ry="4" fill="#d8e4f0" stroke="#24466f" stroke-width="1.5"/>' + dots([2, 8], [8, 4], [14, 8]),
    ellarc: path('M3 11Q-1 4 7 4t7 5-6 4', '#446', 'none', 1.5) + dots([3, 11], [8, 13]),
    insblock: path('M5.5 1.5h7l2 2v7h-9z', BLUE, PALE) + path('M1 6h6v6H1z', '#6a7a20', '#d8dc60') + dot(9, 10, 3, '#a8c850', '#45602c') + area('M16 12v4h-4z', '#111'),
    mkblock: path('M1.5 2.5h7v6h-7z', '#6a7a20', '#d8dc60') + dot(10, 10, 4, '#a8c850', '#45602c') + path('M8 7h6v6H8z', NAVY),
    point: dots([8, 8]),
    hatch: path('M3 1v14M13 1v14M1 3h14M1 13h14', NAVY, '#d8e6f4', 1.5) + path('M3 8l5-5M3 13L13 3M8 13l5-5M3 5l8 8M6 3l7 7', BLUE, 'none', 0.8),
    gradient: area('M3 3h10v10H3z', '#5c6450') + area('M3 3h5v10H3z', '#24304c') + path('M3 1v14M13 1v14M1 3h14M1 13h14', INK, 'none', 1.5),
    region: path('M1.5 3.5h9l4 4v7h-13z', '#446c9c', '#dce8f4') + dot(9, 9, 3, '#fff', '#446c9c'),
    table: path('M1.5 2.5h13v11h-13z', '#3c5ca0', '#fff') + area('M1 2h14v3H1z', '#4878c8') + path('M2 8h12M2 11h12M6 5v8M10 5v8', '#7c98c8'),
    mtext: path('M3 14L8 2l5 12M5 10h6M1.5 14h4M10.5 14h4', '#111', 'none', 1.5),
    erase: path('M1 13.5h12', '#a03c3c', 'none', 1.5) + path('M4 10l4-5 4 3-4 5z', '#667', '#f0f0f0') + path('M9 5l4-4 2 2-3 5z', '#8a6a10', GOLD),
    copyobj: dot(5, 5, 3.5, '#dce8f4', '#345') + dot(11, 11, 3.5, '#dce8f4', '#345') + dot(6, 11, 2.5, '#dce8f4', '#345') + path('M8 2q5 0 5 4M11 5l2 2 2-2', '#1c5ca8', 'none', 1.5),
    mirror: path('M6 3v11H1zM10 3v11h5z', '#445', '#c4ccd4') + path('M8 1v14', '#2c7cc8', 'none', 1.5),
    offset: path('M1 14h14v-3h-4q3-8-3-9-6 1-3 9H1z', '#456', '#dce8f4') + path('M3 12h4q-2-7 1-7t1 7h4', BLUE),
    array: path('M1.5 1.5h5v5h-5zM9.5 1.5h5v5h-5zM1.5 9.5h5v5h-5zM9.5 9.5h5v5h-5z', '#333', '#e4effa', 1.5),
    move: path('M8 2v12M2 8h12', '#34679c', 'none', 2) + area('M8 0l3 4H5zM8 16l3-4H5zM0 8l4-3v6zM16 8l-4-3v6z', '#34679c'),
    rotate: path('M5 3a6 6 0 1 0 6 0', '#34679c', 'none', 2) + area('M2 1h6v5z', '#34679c'),
    scale: path('M1.5 1.5h13v13h-13z', '#5c7ca4', '#cfe0f2') + path('M1.5 7.5h7v7h-7z', '#345', '#fff') + path('M8 7l4-4M12 6V3H9', '#345'),
    stretch: path('M2.5 1.5h4v13h-4z', '#445', '#dce8f4') + path('M6 2l8 12H6', '#2c6cb0', '#e4effa', 1.5),
    trim: path('M1 8h5M10 8h5', '#555') + path('M10 1L5 15', '#2c7cc8', 'none', 1.5),
    extend: path('M1 9h7', '#555') + path('M8 9h4', '#2c7cc8') + path('M14 2l-4 12', '#2c6cb0', 'none', 1.5),
    breakpt: path('M1.5 3.5h13v10h-13z', '#345', '#e4effa', 1.5) + dots([8, 3]),
    break: path('M5 3.5H1.5v10h13v-10H11', '#345', '#e4effa', 1.5) + dots([5, 3], [11, 3]),
    join: path('M1 8h5M10 8h5', INK, 'none', 2) + area('M4 4l4 4-4 4zM12 4L8 8l4 4z', '#24466f'),
    chamfer: path('M2 15V8l6-6h7', '#444', 'none', 1.5) + path('M2 9l7-7', '#2c7cc8', 'none', 2),
    fillet: path('M2 15V9q0-6 6-7h7', '#444', 'none', 1.5) + path('M2 10q0-6 6-7', '#2c7cc8', 'none', 2),
    explode: path('M7 9l7-7', '#8a5020', 'none', 2) + area('M1 7l4 1 1-4 2 4 4 1-3 2 1 4-4-2-4 2 1-4z', '#e87820') + dot(6, 10, 2, '#f4e040') + dot(13, 3, 1.5, RED) + dot(4, 3, 1, RED),

    first: area('M12 2v12L5 8z', '#a8a494') + path('M4 2v12', '#a8a494', 'none', 2),
    prev: area('M11 2v12L4 8z', '#a8a494'),
    next: area('M5 2v12l7-6z', '#a8a494'),
    last: area('M4 2v12l7-6z', '#a8a494') + path('M12 2v12', '#a8a494', 'none', 2),
    up: area('M3 10h10L8 5z', '#3b5690'),
    down: area('M3 6h10l-5 5z', '#3b5690'),
    left: path('M11 2L5 8l6 6', 'currentColor', 'none', 3),
    right: path('M5 2l6 6-6 6', 'currentColor', 'none', 3),
    thumb: path('M5 4v8M8 4v8M11 4v8', '#8ca8f0'),
    lock: path('M2 7h8v8H2z', '#5a4a08', '#d8c020', 1.5) + path('M8 7V3q3-3 5 0v3', '#6a5a10', 'none', 2) + area('M5 9h2v4H5z', '#222'),
    screen: path('M1.5 1.5h13v13h-13z', '#34587c', '#6c94bc') + path('M4.5 4.5h7v7h-7z', '#34587c', '#d8e8f8'),

    flag: area('M2 3q3-2 6 0l-1 5q-3-2-6 0z', '#f06838') + area('M9 3q3 2 6 0l-1 5q-3 2-6 0z', '#7cc848') + area('M1 9q3-2 6 0l-1 5q-3-2-6 0z', '#5c90f0') + area('M8 9q3 2 6 0l-1 5q-3 2-6 0z', '#f8d038'),
    desk: path('M2 3l9-1 3 10-9 2z', '#dceafc', '#4c90d8') + path('M5 5l6-1 1 6-5 1z', '#fff', '#a4ccf4'),
    ie: dot(8, 8, 7, '#3cae4c', '#d4f4d4') + path('M4 7a4 4 0 0 1 8 0M12 10a4 4 0 0 1-8 0M4 8h8', '#fff', 'none', 2),
    kugou: dot(8, 8, 7, '#1c90e4', '#fff') + path('M6 4v8M11 4L7 8l4 4', '#fff', 'none', 2),
    bird: dot(8, 8, 6.5, '#88a8cc', '#5c7ca8') + area('M3 9q4-6 11-3-2 2-4 2t-4 4z', '#f0f6fc'),
    qq: dot(8, 5, 4, '#f0a020') + area('M3 13q0-6 5-6t5 6z', '#c83820') + area('M1 13h13l-2 2H2z', '#f4e4c0') + dot(8, 5, 2, '#fff'),
    word: area('M5 1h10v14H5z', '#f4f8fc') + path('M6 4h8M6 12h8', '#88a') + area('M1 3h10v10H1z', '#2c58a8') + path('M3 5l1 6 2-5 2 5 1-6', '#fff', 'none', 1.5),
    jl: area('M0 0h16v16H0z', '#10e820') + path('M3 13q4-4 3-9M8 13q4-4 3-9M3 5l3-2M8 6l5-3M5 10l8-3', '#d8ffd0'),
    jl2: area('M0 0h16v16H0z', '#40d060') + path('M3 13q4-4 3-9M8 13q4-4 3-9M3 5l3-2M8 6l5-3M5 10l8-3', '#e8ffe8'),
    keyboard: path('M1.5 7.5h13v6h-13z', '#222', '#dcdcdc') + path('M3 9.5h10M4 11.5h8M8 7V4', '#222'),
    collapse: dot(8, 8, 7.5, '#3ca0f0', '#8ccaf8') + path('M9.5 4.5L6 8l3.5 3.5', '#fff', 'none', 2),
    box3: area('M1 2h14v12H1z', '#8a6428') + area('M1 2h14v3H1z', '#4c9a34') + path('M3 8h4v4M9 7h4', '#d0a860'),
    penguin: dot(8, 6, 5, '#202020') + dot(8, 11, 5, '#f0f0f0', '#222') + area('M4 9h8v2H4z', '#e83060') + dot(12, 3, 2.5, '#f060a0') + dot(8, 6, 2, '#fff'),
    monitor: path('M2 3h12v4H2z', '#1c4878', '#6cc4f0') + path('M4 7h10v7H4z', '#1c4878', '#2c70a8') + path('M7 9v4M10 9h3', '#dff'),
    globe: dot(8, 8, 7, '#48a0e8', '#cfe8fc') + dot(6, 8, 2, '#fff') + dot(11, 8, 1.5, '#fff') + path('M4 3q4-3 8 1', '#0c4c9c'),
    net: path('M5.5 1.5h8v6h-8z', '#223', '#88a4dc') + path('M2.5 7.5h8v6h-8z', '#223', '#6484cc') + path('M4 15h6', '#ccd', 'none', 2),
    shield: path('M8 1q3 2 6 2 0 9-6 12Q2 12 2 3q3 0 6-2z', '#fff', '#f0d040') + area('M8 2v6H3V4q3 0 5-2z', '#e05828') + area('M8 8h5q-1 4-5 6z', '#48a848'),
};

const labels = { drop: 'More', dropoff: 'More' };

function fillIcon(svg, name) {
    svg.setAttribute('viewBox', '0 0 16 16');
    svg.setAttribute('aria-hidden', 'true');
    svg.innerHTML = icons[name];
}

document.querySelectorAll('[data-tools]').forEach((bar) => {
    bar.dataset.tools.split(' ').forEach((name) => {
        if (name === '|') {
            const sep = document.createElement('i');
            sep.className = 'sep';
            bar.append(sep);
            return;
        }
        const button = document.createElement('button');
        button.className = `t-${name}`;
        button.setAttribute('aria-label', labels[name] || name);
        const svg = document.createElementNS('http://www.w3.org/2000/svg', 'svg');
        fillIcon(svg, name);
        button.append(svg);
        bar.append(button);
    });
});

document.querySelectorAll('svg[data-icon]').forEach((svg) => {
    if (svg.dataset.icon !== 'layerstate') {
        fillIcon(svg, svg.dataset.icon);
    }
});

// on / thaw / viewport / lock / colour of the current layer
document.querySelector('.layer-state').innerHTML =
    dot(6, 5, 3, '#fdf6a0', '#b09420') + path('M5 10h3M5 12h3', '#667') +
    path('M14 3l8 8M22 3l-8 8', '#d8b818') + dot(18, 7, 4.5, '#f4dc20', '#90a020') +
    dot(30, 6, 4, '#8cacc8', '#5c7c9c') + path('M31.5 8.5h5v4h-5z', BLUE, '#fff') +
    path('M44.5 6.5h5v5h-5z', '#6a6a10', '#e0d840') + path('M45 6V4q-2-3-4 0v3', '#8a8a20', 'none', 1.5) +
    path('M52.5 3.5h7v8h-7z', '#333', '#fff');

// duct profile: a diameter every 79.72 along the 1275.49 axis
const widths = [198.91, 168.01, 141.81, 124.3, 118.15, 124.3, 141.81, 168.01, 198.91,
    229.82, 256.02, 273.52, 279.67, 273.52, 256.02, 229.82, 198.91];
const LEFT = 75;
const STEP = 59.65;
const AXIS = 314;
const SCALE = 0.748;

const stationX = (i) => Math.floor(LEFT + i * STEP) + 0.5;
const half = (w) => w / 2 * SCALE;

function edge(side) {
    const pts = [];
    for (let t = 0; t <= 16; t += 0.5) {
        const w = 198.91 - 80.76 * Math.sin(Math.PI * t / 8);
        pts.push(`${(LEFT + t * STEP).toFixed(1)} ${(AXIS + side * half(w)).toFixed(1)}`);
    }
    return pts.join('L');
}

function verticalDim(x, w, cls) {
    const top = AXIS - half(w);
    const bottom = AXIS + half(w);
    return `<path class="dim-line" d="M${x} ${top}V${bottom}M${x - 5} ${top}h5M${x - 5} ${bottom}h5"/>` +
        `<path class="dim-arrow" d="M${x} ${top}l2 8h-4zM${x} ${bottom}l2-8h-4z"/>` +
        `<text class="dim-text ${cls}" transform="translate(${x} ${AXIS}) rotate(-90)">${w}</text>`;
}

function horizontalDim(x1, x2, y, from, label) {
    return `<path class="dim-line" d="M${x1} ${y}H${x2}M${x1} ${from}V${y + 4}M${x2} ${from}V${y + 4}"/>` +
        `<path class="dim-arrow" d="M${x1} ${y}l8-2v4zM${x2} ${y}l-8-2v4z"/>` +
        `<text class="dim-text wide" x="${(x1 + x2) / 2}" y="${y}">${label}</text>`;
}

const end = stationX(16);
let sheet = '<path class="axis" d="M65 314.5H1039"/>';
sheet += `<path class="outline" d="M${edge(-1)}M${edge(1)}M75.5 239.6V388.4M${end} 239.6V388.4"/>`;
for (let i = 1; i < 16; i++) {
    sheet += verticalDim(stationX(i), widths[i], '');
}
sheet += verticalDim(55.5, 198.91, 'tall') + verticalDim(1067.5, 198.91, 'tall');
sheet += `<path class="dim-line" d="M50 239.6H75M50 388.4H75M${end} 239.6H1072M${end} 388.4H1072"/>`;
sheet += horizontalDim(stationX(3), stationX(4), 398.5, 360, '79.72');
sheet += horizontalDim(75.5, end, 464.5, 389, '1275.49');
document.querySelector('#sheet').insertAdjacentHTML('afterbegin', sheet);
```
